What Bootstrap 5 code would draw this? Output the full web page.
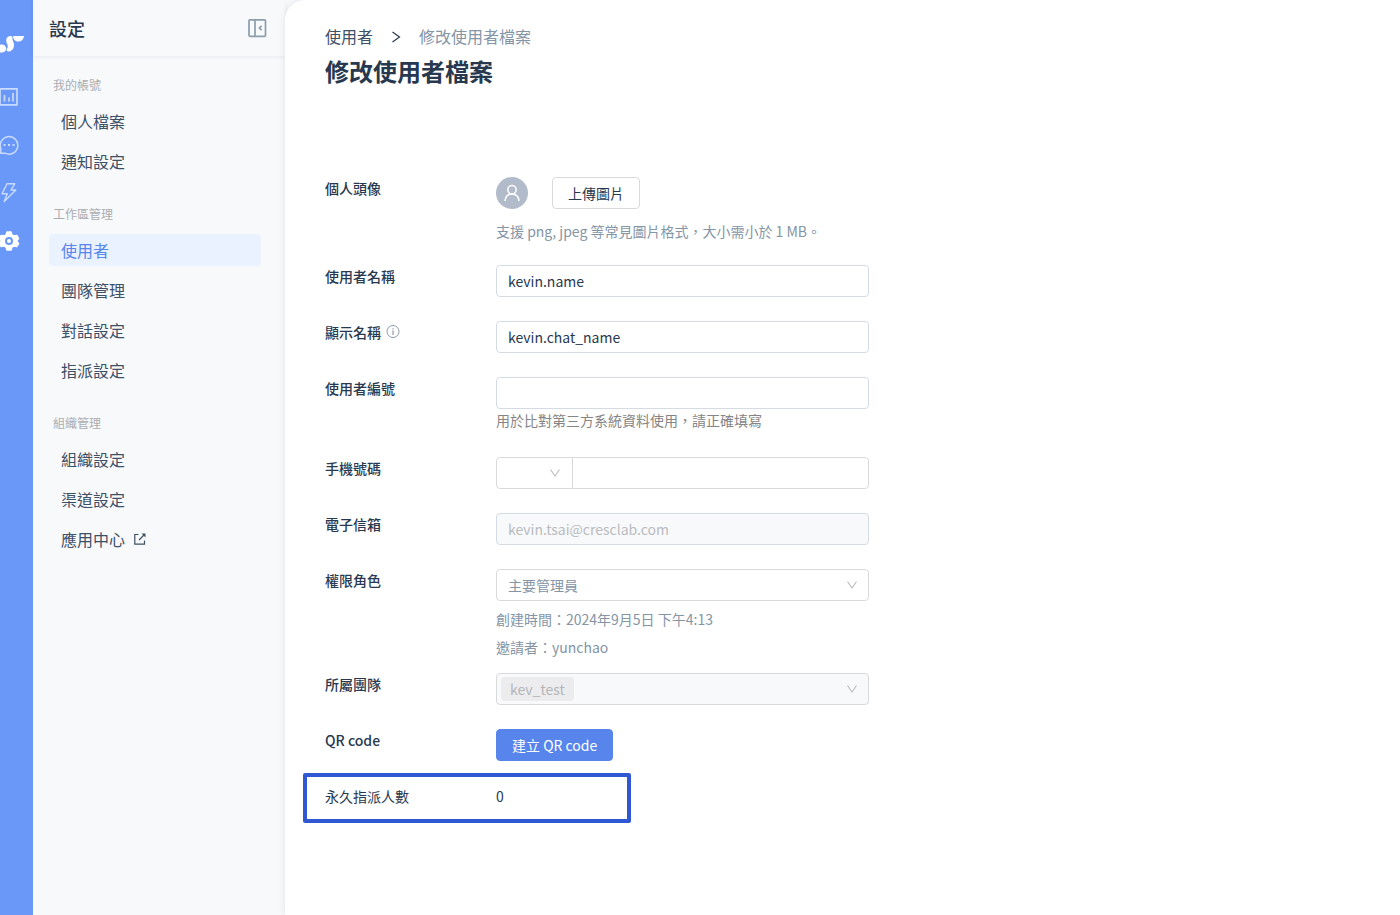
<!DOCTYPE html>
<html lang="zh-Hant">
<head>
<meta charset="utf-8">
<meta name="viewport" content="width=device-width, initial-scale=1">
<title>修改使用者檔案</title>
<link href="https://cdn.jsdelivr.net/npm/bootstrap@5.3.0/dist/css/bootstrap.min.css" rel="stylesheet">
<style>
:root{--ink:#28394f;--slate:#3d5066;--muted:#8495a6;--line:#d5dbe3;--soft:#f8f9fb;--brand:#5785eb}
body{font-family:"Noto Sans CJK TC",sans-serif;font-size:14px;line-height:22px;color:var(--ink);background:var(--soft)}
a{text-decoration:none}
.rail{width:33px;background:#6a98f8;padding-top:34px}
.rail a{display:block;height:20px;margin-bottom:28px;color:#c9dbff}
.rail a.brand-link{margin-bottom:33px;color:#fff}
.rail a.on{color:#fff}
.rail svg{display:block}
.side{width:252px}
.side-head{height:56px;padding:0 18px 0 16px;box-shadow:0 1px 4px rgba(40,57,79,.08)}
.side-head h2{font-size:18px;font-weight:500;line-height:28px}
.side-body{padding:19px 24px 24px 16px}
.side-body h3{font-size:12px;font-weight:400;line-height:20px;color:#aaadb1;padding-left:4px;margin-bottom:10px}
.side-body ul{margin-bottom:27px}
.side-link{display:flex;align-items:center;gap:8px;height:32px;padding-left:12px;border-radius:4px;font-size:16px;color:var(--slate)}
.side-link.active{background:#ebf2ff;color:var(--brand)}
.page{background:#fff;border-top-left-radius:20px;box-shadow:0 0 6px rgba(40,57,79,.12);padding:24px 40px}
.crumbs{font-size:16px;line-height:24px;gap:16px}
.crumbs a{color:var(--slate)}
.crumbs span{color:var(--muted)}
h1{font-size:24px;line-height:32px;font-weight:700;margin:7px 0 90px}
.profile{max-width:544px}
.field{display:flex;margin-bottom:24px}
.field-name{width:171px;flex:none;font-weight:500}
.form-control,.form-select{height:32px;padding:3px 11px;font-size:14px;line-height:24px;color:var(--ink);border:1px solid var(--line);border-radius:4px}
.form-select{border-color:#d9d9d9;color:var(--muted);background-image:url("data:image/svg+xml,%3Csvg xmlns='http://www.w3.org/2000/svg' viewBox='0 0 12 12'%3E%3Cpath d='M1.5 2.5L6 9l4.500-6.500' fill='none' stroke='%23bfbfbf' stroke-width='1.200'/%3E%3C/svg%3E");background-size:12px 12px;background-position:right 10px center}
.form-control:disabled,.form-select:disabled{background-color:var(--soft);color:#b9bcc0}
.phone .form-select{width:77px;flex:none;background-position:right 11px center}
.phone .form-control{border-color:#d9d9d9}
.hint{margin-top:12px;line-height:20px;color:var(--muted)}
.note-line{min-height:24px;color:#858585}
.btn{height:32px;padding:3px 15px;font-size:14px;line-height:24px;border-radius:4px}
.btn-outline{border:1px solid #d9d9d9;color:var(--ink);background:#fff}
.btn-brand{background:var(--brand);color:#fff;border-color:var(--brand)}
.meta-line{line-height:28px;color:var(--muted)}
.team-tag{position:absolute;left:5px;top:4px;padding:0 9px;line-height:24px;height:24px;border-radius:4px;background:#ececee;color:#b4b6b9}
.marked::after{content:"";position:absolute;left:-22px;top:-12px;width:328px;height:50px;border:4px solid #3158d3;border-radius:2px;pointer-events:none}
</style>
</head>
<body>
<div class="d-flex min-vh-100">
  <nav class="rail flex-shrink-0" aria-label="主選單">
    <a class="brand-link" href="#" aria-label="首頁"><svg width="26" height="20" viewBox="0 0 26 20" fill="currentColor"><path d="M0 10.800C3 9.600 6.200 11.500 6.200 14.500S3 19 0 18.500z"/><path d="M10.500 2C12 2 12.800 3 12.500 4.500c-.4 2 2 4 1.500 7.500-.5 3.600-3 5.500-5.500 5.500-2 0-2.300-1.600-1.200-3.200C9 11.500 6 9 6.200 6 6.400 3.500 8.300 2 10.500 2z"/><path d="M13 2h11c-.5 3.700-2.800 5.600-5.700 5.600C15 7.600 13.200 5.300 13 2z"/></svg></a>
    <a href="#" aria-label="報表"><svg width="20" height="20" viewBox="0 0 20 20" fill="none" stroke="currentColor" stroke-width="1.700"><path d="M0 1.800h17v16H0zM4.500 8v6.500M9 10.500v4M13 6v8.500"/></svg></a>
    <a href="#" aria-label="對話"><svg width="20" height="20" viewBox="0 0 20 20" fill="none" stroke="currentColor" stroke-width="1.500"><path d="M.3 18.200l.7-4.200A8.800 8.800 0 1 1 5 18.200z"/><path d="M3.500 10h2M8 10h2M12.500 10h2" stroke-width="2"/></svg></a>
    <a href="#" aria-label="自動化"><svg width="20" height="20" viewBox="0 0 20 20" fill="none" stroke="currentColor" stroke-width="1.400" stroke-linejoin="round"><path d="M7 .8h7.700L11 7h4.800L4.200 18.500 7.300 10.800H2z"/></svg></a>
    <a class="on" href="#" aria-label="設定"><svg width="20" height="20" viewBox="0 0 20 20" fill="currentColor" stroke="currentColor" stroke-width="1.500" stroke-linejoin="round"><path d="M7 1h4l1 3 1.700 1 3.100-.6 1.800 3.200L16.500 10l2.100 2.400-1.800 3.200-3.100-.6-1.700 1-1 3H7l-1-3-1.700-1-3.100.6-1.800-3.200L1.500 10-.6 7.600l1.800-3.200 3.100.6L6 4z"/><circle cx="9" cy="10" r="3" stroke="#6a98f8" stroke-width="2"/></svg></a>
  </nav>

  <aside class="side flex-shrink-0">
    <div class="side-head d-flex align-items-center justify-content-between">
      <h2 class="mb-0">設定</h2>
      <button class="border-0 bg-transparent p-0 lh-1" type="button" aria-label="收合選單"><svg class="d-block" width="19" height="20" viewBox="0 0 19 20" fill="none" stroke="#8c9dac" stroke-width="1.700"><rect x="1" y="1.800" width="16.500" height="16.500" rx="1"/><path d="M7 1.800v16.500M13.600 7.800l-2.200 2.200 2.200 2.200"/></svg></button>
    </div>
    <div class="side-body">
      <h3>我的帳號</h3>
      <ul class="list-unstyled d-grid gap-2">
        <li><a class="side-link" href="#">個人檔案</a></li>
        <li><a class="side-link" href="#">通知設定</a></li>
      </ul>
      <h3>工作區管理</h3>
      <ul class="list-unstyled d-grid gap-2">
        <li><a class="side-link active" href="#" aria-current="page">使用者</a></li>
        <li><a class="side-link" href="#">團隊管理</a></li>
        <li><a class="side-link" href="#">對話設定</a></li>
        <li><a class="side-link" href="#">指派設定</a></li>
      </ul>
      <h3>組織管理</h3>
      <ul class="list-unstyled d-grid gap-2">
        <li><a class="side-link" href="#">組織設定</a></li>
        <li><a class="side-link" href="#">渠道設定</a></li>
        <li><a class="side-link" href="#">應用中心 <svg width="14" height="14" viewBox="0 0 14 14" fill="none" stroke="currentColor" stroke-width="1.200"><path d="M5.500 2.500H1.800v9.700h9.700V8.500M6 8l5.500-5.500"/><path d="M8.500 1.500h4v4z" fill="currentColor" stroke="none"/></svg></a></li>
      </ul>
    </div>
  </aside>

  <main class="page flex-grow-1">
    <nav class="crumbs d-flex align-items-center" aria-label="breadcrumb">
      <a href="#">使用者</a>
      <svg width="14" height="14" viewBox="0 0 14 14" fill="none" stroke="#28394f" stroke-width="1.200"><path d="M3.500 3l7 5-7 5"/></svg>
      <span>修改使用者檔案</span>
    </nav>
    <h1>修改使用者檔案</h1>

    <form class="profile">
      <div class="field">
        <label class="field-name" for="photo">個人頭像</label>
        <div>
          <div class="d-flex align-items-center gap-4">
            <svg width="32" height="32" viewBox="0 0 32 32" fill="none" stroke="#fff" stroke-width="1.500"><circle cx="16" cy="16" r="16" fill="#b1bbc9" stroke="none"/><circle cx="16" cy="12.800" r="4.200"/><path d="M9 24c.5-4.500 3.200-7 7-7s6.500 2.500 7 7"/></svg>
            <button class="btn btn-outline" id="photo" type="button">上傳圖片</button>
          </div>
          <div class="hint">支援 png, jpeg 等常見圖片格式，大小需小於 1 MB。</div>
        </div>
      </div>
      <div class="field">
        <label class="field-name" for="uname">使用者名稱</label>
        <input class="form-control" id="uname" type="text" value="kevin.name">
      </div>
      <div class="field">
        <label class="field-name d-flex gap-1" for="dname">顯示名稱
          <svg class="mt-1" width="16" height="14" viewBox="0 0 16 14" fill="none" stroke="#8c9bab"><circle cx="8" cy="6.500" r="6"/><path d="M8 5.500V10M8 3.300v1.200" stroke-width="1.200"/></svg></label>
        <input class="form-control" id="dname" type="text" value="kevin.chat_name">
      </div>
      <div class="field">
        <label class="field-name" for="uid">使用者編號</label>
        <div class="flex-grow-1">
          <input class="form-control" id="uid" type="text">
          <div class="note-line">用於比對第三方系統資料使用，請正確填寫</div>
        </div>
      </div>
      <div class="field">
        <label class="field-name" for="phone">手機號碼</label>
        <div class="input-group phone flex-nowrap">
          <select class="form-select" aria-label="國碼"><option></option></select>
          <input class="form-control" id="phone" type="tel">
        </div>
      </div>
      <div class="field">
        <label class="field-name" for="mail">電子信箱</label>
        <input class="form-control" id="mail" type="email" value="kevin.tsai@cresclab.com" disabled>
      </div>
      <div class="field mb-2 pb-1">
        <label class="field-name" for="role">權限角色</label>
        <div class="flex-grow-1">
          <select class="form-select mb-1" id="role"><option>主要管理員</option></select>
          <div class="meta-line">創建時間：2024年9月5日 下午4:13</div>
          <div class="meta-line">邀請者：yunchao</div>
        </div>
      </div>
      <div class="field">
        <label class="field-name" for="team">所屬團隊</label>
        <div class="position-relative flex-grow-1">
          <select class="form-select" id="team" disabled><option></option></select>
          <span class="team-tag">kev_test</span>
        </div>
      </div>
      <div class="field">
        <label class="field-name" for="qr">QR code</label>
        <button class="btn btn-brand" id="qr" type="button">建立 QR code</button>
      </div>
      <div class="field marked position-relative">
        <div class="field-name fw-normal">永久指派人數</div>
        <div>0</div>
      </div>
    </form>
  </main>
</div>
<script src="https://cdn.jsdelivr.net/npm/bootstrap@5.3.0/dist/js/bootstrap.bundle.min.js"></script>
</body>
</html>
